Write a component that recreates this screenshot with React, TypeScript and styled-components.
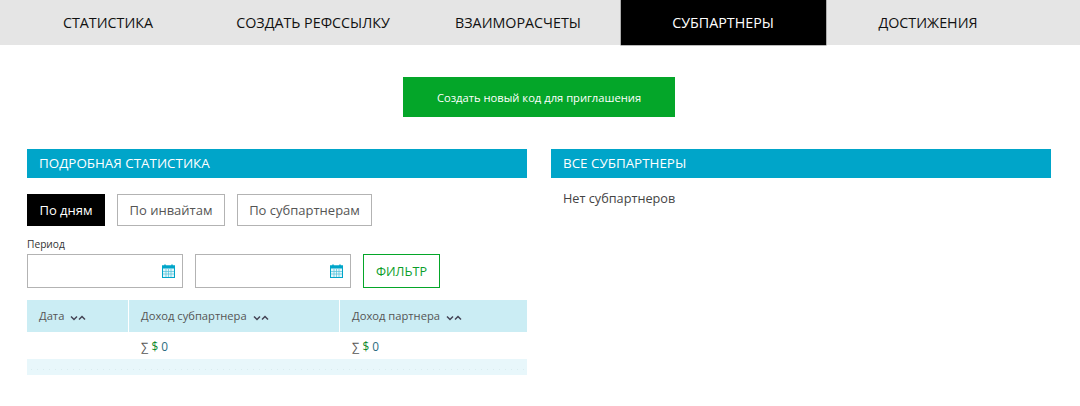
import React from "react";
import styled, { createGlobalStyle } from "styled-components";

const Global = createGlobalStyle`
  html, body { margin: 0; padding: 0; background: #fff; }
  body { font-family: "Open Sans", "Liberation Sans", sans-serif; color: #444; }
  * { box-sizing: border-box; }
`;
const Page = styled.div`width: 1080px; height: 406px; overflow: hidden; background: #fff;`;
const Nav = styled.nav`display: flex; height: 45px; padding-left: 5.5px; background: #e5e5e5;`;
const NavItem = styled.a<{ $active?: boolean }>`
  width: 205px; display: flex; align-items: center; justify-content: center;
  font-size: 14.3px; text-transform: uppercase;
  color: ${(p) => (p.$active ? "#fff" : "#111")};
  background: ${(p) => (p.$active ? "#000" : "transparent")};
  box-shadow: ${(p) => (p.$active ? "0 0 0 0.5px #777" : "none")};
`;
const CreateRow = styled.div`display: flex; justify-content: center; padding: 32px 2px 0 0; height: 104px;`;
const CreateButton = styled.button`
  width: 272px; height: 40px; border: 0; background: #04a629; color: #fff;
  font: 11.2px "Open Sans", sans-serif; padding: 0;
`;
const Columns = styled.div`display: flex; gap: 24px; padding-left: 27px;`;
const Column = styled.section`width: 500px;`;
const PanelTitle = styled.h2`
  margin: 0; height: 29px; padding-left: 12px; background: #00a5c9; color: #fff;
  font-size: 13.4px; font-weight: 400; line-height: 29px; text-transform: uppercase;
`;
const Empty = styled.p`margin: 0; padding: 12px 12px 0; font-size: 12.7px; line-height: 17px; color: #444;`;
const Tabs = styled.div`display: flex; gap: 12px; margin-top: 16px;`;
const Tab = styled.button<{ $active?: boolean; $w: number }>`
  width: ${(p) => p.$w}px; height: 32px; padding: 0;
  font: 13px "Open Sans", sans-serif;
  background: ${(p) => (p.$active ? "#000" : "#fff")};
  color: ${(p) => (p.$active ? "#fff" : "#555")};
  border: 1px solid ${(p) => (p.$active ? "#000" : "#b3b3b3")};
`;
const Label = styled.div`margin-top: 12px; height: 16px; font-size: 10.2px; line-height: 13px; color: #333;`;
const FilterRow = styled.div`display: flex; gap: 12px; margin-top: 0;`;
const DateField = styled.div`
  width: 156px; height: 34px; border: 1px solid #b3b3b3; background: #fff;
  display: flex; align-items: center; justify-content: flex-end; padding-right: 7px;
`;
const FilterButton = styled.button`
  width: 77px; height: 34px; padding: 0; background: #fff; border: 1px solid #04a629;
  color: #0a9e2a; font: 12.6px "Open Sans", sans-serif;
`;
const Table = styled.table`
  width: 500px; margin-top: 12px; border-collapse: separate; border-spacing: 0; table-layout: fixed;
  font-size: 11.2px; color: #555;
`;
const HeadCell = styled.th<{ $w: number }>`
  width: ${(p) => p.$w}px; height: 32px; padding: 0 0 2px 12px; background: #cbedf4;
  font-weight: 400; text-align: left; border-left: 1px solid #fff;
  &:first-child { border-left: 0; }
`;
const SumCell = styled.td`height: 27px; padding: 0 0 0 12px; color: #555; border-left: 1px solid #fff; font-size: 11.8px;`;
const Dollar = styled.span`color: #0a8a2a;`;
const Zero = styled.span`color: #2b6c80;`;
const FooterCell = styled.td`
  height: 16px; padding: 0; position: relative;
  background-color: #e8f7fb;
  background-image: repeating-linear-gradient(to right, #d9ecef 0 1px, transparent 1px 6px);
  background-size: 100% 1px;
  background-position: 4px 10px;
  background-repeat: no-repeat;
`;
const SortIcon = styled.svg`margin-left: 3px; vertical-align: -1px;`;

const Calendar = () => (
  <svg width="13" height="14" viewBox="0 0 13 14" fill="none">
    <rect x="0.5" y="2" width="12" height="11.5" fill="#e4f6fa" stroke="#00a5c9" />
    <rect x="0.5" y="2" width="12" height="2" fill="#00a5c9" stroke="#00a5c9" />
    <path d="M3 0.5v3M10 0.5v3" stroke="#00a5c9" strokeWidth="1.5" />
    <path d="M4 5v8M6.5 5v8M9 5v8M1 7.5h11M1 10h11" stroke="#4fc0d9" strokeWidth="0.7" />
  </svg>
);
const Sort = () => (
  <SortIcon width="16" height="6" viewBox="0 0 16 6" fill="none">
    <path d="M1 1.5l3 3 3-3" stroke="#445" strokeWidth="1.5" />
    <path d="M9 4.5l3-3 3 3" stroke="#445" strokeWidth="1.5" />
  </SortIcon>
);
const Sum = () => (
  <>∑ <Dollar>$</Dollar> <Zero>0</Zero></>
);

export default function App() {
  return (
    <Page>
      <Global />
      <Nav>
        <NavItem>Статистика</NavItem>
        <NavItem>Создать рефссылку</NavItem>
        <NavItem>Взаиморасчеты</NavItem>
        <NavItem $active>Субпартнеры</NavItem>
        <NavItem>Достижения</NavItem>
      </Nav>
      <CreateRow>
        <CreateButton>Создать новый код для приглашения</CreateButton>
      </CreateRow>
      <Columns>
        <Column>
          <PanelTitle>Подробная статистика</PanelTitle>
          <Tabs>
            <Tab $active $w={78}>По дням</Tab>
            <Tab $w={108}>По инвайтам</Tab>
            <Tab $w={135}>По субпартнерам</Tab>
          </Tabs>
          <Label>Период</Label>
          <FilterRow>
            <DateField><Calendar /></DateField>
            <DateField><Calendar /></DateField>
            <FilterButton>ФИЛЬТР</FilterButton>
          </FilterRow>
          <Table>
            <thead>
              <tr>
                <HeadCell $w={101}>Дата <Sort /></HeadCell>
                <HeadCell $w={211}>Доход субпартнера <Sort /></HeadCell>
                <HeadCell $w={188}>Доход партнера <Sort /></HeadCell>
              </tr>
            </thead>
            <tbody>
              <tr>
                <SumCell />
                <SumCell><Sum /></SumCell>
                <SumCell><Sum /></SumCell>
              </tr>
              <tr><FooterCell colSpan={3} /></tr>
            </tbody>
          </Table>
        </Column>
        <Column>
          <PanelTitle>Все субпартнеры</PanelTitle>
          <Empty>Нет субпартнеров</Empty>
        </Column>
      </Columns>
    </Page>
  );
}
